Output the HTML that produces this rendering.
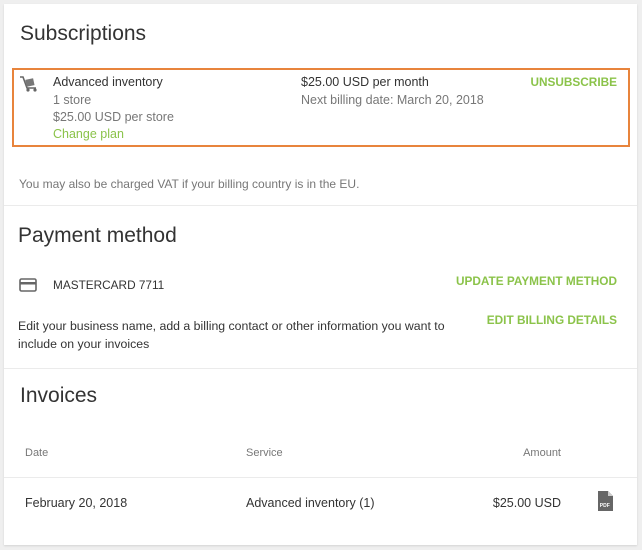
<!DOCTYPE html>
<html><head><meta charset="utf-8"><style>
html,body{margin:0;padding:0}
body{width:642px;height:550px;background:#efefef;font-family:"Liberation Sans",sans-serif;position:relative;overflow:hidden;color:#333}
.card{position:absolute;left:4px;top:4px;width:633px;height:541px;background:#fff;box-shadow:0 1px 2px rgba(0,0,0,.12)}
.a{position:absolute;white-space:nowrap}
h2{font-weight:normal;font-size:21px;color:#333;margin:0;position:absolute}
.g{color:#8bc34a}
.btn{color:#8bc34a;font-weight:bold;font-size:11.8px;letter-spacing:0}
.t13{font-size:12.5px}
.gray{color:#777}
.hr{position:absolute;left:0;width:633px;height:1px;background:#ebebeb}
</style></head><body>
<div class="card">
<h2 style="left:16px;top:18px">Subscriptions</h2>
<div style="position:absolute;left:8px;top:64px;width:614px;height:75px;border:2px solid #e8843c"></div>
<svg class="a" style="left:15px;top:71px" width="20" height="18" viewBox="0 0 20 18"><path d="M1 2h3l4 11h9" fill="none" stroke="#666" stroke-width="1.6"/><rect x="7" y="4" width="8" height="7" fill="#777" transform="rotate(-12 11 8)"/><circle cx="9" cy="15" r="1.6" fill="#666"/><circle cx="16" cy="15" r="1.6" fill="#666"/></svg>
<div class="a t13" style="left:49px;top:71px">Advanced inventory</div>
<div class="a t13 gray" style="left:49px;top:89px">1 store</div>
<div class="a t13 gray" style="left:49px;top:106px">$25.00 USD per store</div>
<div class="a t13 g" style="left:49px;top:123px">Change plan</div>
<div class="a t13" style="left:297px;top:71px">$25.00 USD per month</div>
<div class="a t13 gray" style="left:297px;top:89px">Next billing date: March 20, 2018</div>
<div class="a btn" style="right:20px;top:71px">UNSUBSCRIBE</div>
<div class="a gray" style="left:15px;top:173px;font-size:12px">You may also be charged VAT if your billing country is in the EU.</div>
<div class="hr" style="top:201px"></div>
<h2 style="left:14px;top:220px">Payment method</h2>
<svg class="a" style="left:15px;top:274px" width="18" height="14" viewBox="0 0 18 14"><rect x="1" y="1" width="16" height="12" rx="1.5" fill="none" stroke="#666" stroke-width="1.6"/><rect x="1" y="4" width="16" height="2.5" fill="#666"/></svg>
<div class="a" style="left:49px;top:274px;font-size:11.8px">MASTERCARD 7711</div>
<div class="a btn" style="right:20px;top:270px">UPDATE PAYMENT METHOD</div>
<div class="a" style="left:14px;top:313px;line-height:18px;font-size:12.3px">Edit your business name, add a billing contact or other information you want to<br>include on your invoices</div>
<div class="a btn" style="right:20px;top:309px">EDIT BILLING DETAILS</div>
<div class="hr" style="top:364px"></div>
<h2 style="left:16px;top:380px">Invoices</h2>
<div class="a gray" style="left:21px;top:443px;font-size:11px">Date</div>
<div class="a gray" style="left:242px;top:443px;font-size:11px">Service</div>
<div class="a gray" style="right:76px;top:443px;font-size:11px">Amount</div>
<div class="hr" style="top:473px"></div>
<div class="a t13" style="left:21px;top:492px">February 20, 2018</div>
<div class="a t13" style="left:242px;top:492px">Advanced inventory (1)</div>
<div class="a t13" style="right:76px;top:492px">$25.00 USD</div>
<svg class="a" style="left:594px;top:487px" width="15" height="20" viewBox="0 0 15 20"><path d="M0 0h10l5 5v15H0z" fill="#666"/><path d="M10 0v5h5" fill="#ccc"/><text x="1.8" y="16" font-size="5" fill="#fff" font-family="Liberation Sans" font-weight="bold">PDF</text></svg>
</div>
</body></html>
